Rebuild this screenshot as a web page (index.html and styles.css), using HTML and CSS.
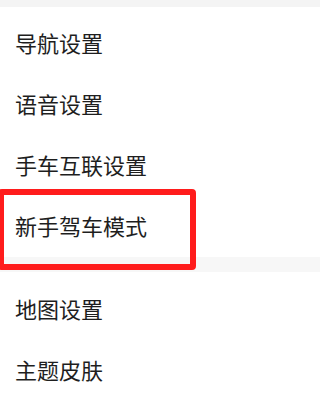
FILE: index.html
```html
<!DOCTYPE html>
<html lang="zh-CN">
<head>
<meta charset="utf-8">
<link rel="stylesheet" href="styles.css">
</head>
<body>
<div class="page">
  <div class="topband"></div>
  <div class="section first">
    <div class="row">导航设置</div>
    <div class="row">语音设置</div>
    <div class="row">手车互联设置</div>
    <div class="row">新手驾车模式</div>
  </div>
  <div class="divider"></div>
  <div class="section second">
    <div class="row">地图设置</div>
    <div class="row">主题皮肤</div>
  </div>
  <div class="highlight"></div>
</div>
</body>
</html>
```
FILE: styles.css
```css
html, body {
  margin: 0;
  padding: 0;
  background: #ffffff;
  overflow: hidden;
}
.page {
  position: relative;
  width: 100%;
  height: 400px;
  overflow: hidden;
  font-family: "Noto Sans CJK SC", "Noto Sans", sans-serif;
  color: #1e1e1e;
}
.topband {
  height: 7px;
  background: #f4f4f4;
}
.section {
  display: flex;
  flex-direction: column;
  background: #ffffff;
}
.section.first {
  padding: 4px 0 2px;
}
.section.second {
  padding-top: 5px;
}
.row {
  height: 61px;
  display: flex;
  align-items: center;
  padding-left: 15px;
  font-size: 22px;
  line-height: 1;
}
.divider {
  height: 15px;
  background: #f7f7f7;
}
.highlight {
  position: absolute;
  left: -2px;
  top: 189px;
  width: 186px;
  height: 69px;
  border: 6px solid #ff1c1c;
  border-radius: 4px;
}
```
